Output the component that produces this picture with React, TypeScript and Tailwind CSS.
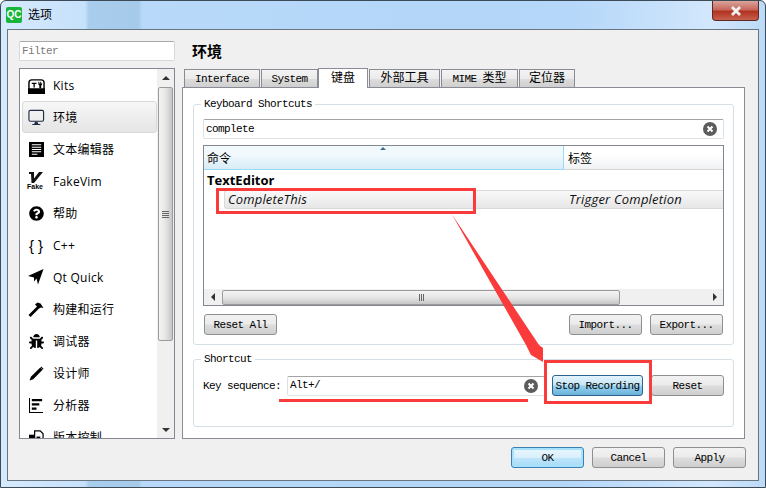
import React from "react";
import { FaBug, FaQuestionCircle } from "react-icons/fa";

const mono = "font-['Liberation_Mono','Noto_Sans_CJK_SC',monospace] text-[11px] tracking-[-0.6px] whitespace-nowrap";
const ui = "font-['Open_Sans','Noto_Sans_CJK_SC',sans-serif]";
const btn =
  "flex items-center justify-center h-[21px] pt-[1px] rounded-[3px] border border-[#8e8f8f] bg-[linear-gradient(#f2f2f2,#ebebeb_48%,#dddddd_52%,#cfcfcf)] text-black";

const Icons: Record<string, React.ReactNode> = {
  kits: (
    <svg viewBox="0 0 18 18" className="w-[17px] h-[17px]">
      <path d="M1 17V6q0-3 3-3h10q3 0 3 3v11z" fill="none" stroke="#000" strokeWidth="1.5" />
      <path d="M0 12h18v6H0z" fill="#000" />
      <path d="M4 6h5v1.5H7.2V11H5.8V7.5H4zM11 5h1v2h1V5h1v2h1V5h0v3l-1 1v3h-2V9l-1-1z" fill="#000" />
    </svg>
  ),
  env: (
    <svg viewBox="0 0 18 18" className="w-[17px] h-[17px]">
      <rect x="1" y="1.5" width="15.5" height="11.5" rx="1.5" fill="none" stroke="#1c2d44" strokeWidth="1.2" />
      <path d="M7.5 13.5h2.5l1 2.5h2v1H4.500v-1h2z" fill="#1c2d44" />
    </svg>
  ),
  text: (
    <svg viewBox="0 0 16 16" className="w-[15px] h-[15px]">
      <path d="M0 0h16v16H0z" fill="#000" />
      <path d="M3 3h10M3 5.500h10M3 8h10M3 10.500h10M3 13h6" stroke="#fff" strokeWidth="1.1" />
    </svg>
  ),
  help: <FaQuestionCircle className="w-[15px] h-[15px] text-black" />,
  bug: <FaBug className="w-[15px] h-[15px] text-black" />,
  plane: (
    <svg viewBox="0 0 16 16" className="w-[16px] h-[16px]">
      <path d="M0 7L15.500 0 10 15.500 8.500 9.500 6 12.500 6 8.500z" fill="#000" />
    </svg>
  ),
  hammer: (
    <svg viewBox="0 0 16 16" className="w-[16px] h-[16px]">
      <path d="M0.500 14L9 5.500 7 3.500 9.500 1.500 12.500 2.500 15.500 7 13 6.500 11 7.500 2.500 16z" fill="#000" />
    </svg>
  ),
  pencil: (
    <svg viewBox="0 0 16 16" className="w-[15px] h-[15px]">
      <path d="M0.500 15.500L2 11.500 12 1.500 14.500 4 4.500 14z" fill="#000" />
      <path d="M13 0.500l2.500 2.500-0.800 0.800-2.500-2.500z" fill="#000" />
    </svg>
  ),
  analyze: (
    <svg viewBox="0 0 16 16" className="w-[15px] h-[15px]">
      <path d="M0.500 0v15.500H15" fill="none" stroke="#000" strokeWidth="1.200" />
      <path d="M3 1h11v2.500H3zM3 5.500h8V8H3zM3 10h5v2.500H3z" fill="#000" />
    </svg>
  ),
  vcs: (
    <svg viewBox="0 0 16 16" className="w-[15px] h-[15px]">
      <path d="M0 5h6V16H0z" fill="#000" />
      <path d="M6 1h6l3 3v11H6z" fill="#fff" stroke="#000" strokeWidth="1.300" />
      <path d="M8 7h4v4H8z" fill="#000" />
    </svg>
  ),
};

const fakeVim = (
  <div className="w-[16px] h-[18px]">
    <svg viewBox="0 0 16 11" className="w-[16px] h-[11px]">
      <path d="M1 0h5v6.500L11 0h4L6 11H3.500L3 2H1z" fill="#111" />
    </svg>
    <span className="block font-['Liberation_Sans',sans-serif] text-[7px] font-bold leading-[7px] -ml-[1px] text-black">Fake</span>
  </div>
);

const curly = <span className="font-['Liberation_Sans',sans-serif] text-[15px] leading-none text-black">{"{ }"}</span>;

const items: { name: string; icon: React.ReactNode; selected?: boolean }[] = [
  { name: "Kits", icon: Icons.kits },
  { name: "环境", icon: Icons.env, selected: true },
  { name: "文本编辑器", icon: Icons.text },
  { name: "FakeVim", icon: fakeVim },
  { name: "帮助", icon: Icons.help },
  { name: "C++", icon: curly },
  { name: "Qt Quick", icon: Icons.plane },
  { name: "构建和运行", icon: Icons.hammer },
  { name: "调试器", icon: Icons.bug },
  { name: "设计师", icon: Icons.pencil },
  { name: "分析器", icon: Icons.analyze },
  { name: "版本控制", icon: Icons.vcs },
];

const cjk = "text-[12px] tracking-normal";

const tabs: { label: React.ReactNode; key: string; w: string; active?: boolean }[] = [
  { key: "interface", label: "Interface", w: "w-[76px]" },
  { key: "system", label: "System", w: "w-[57px]" },
  { key: "keyboard", label: <span className={cjk}>键盘</span>, w: "w-[50px] -ml-[1px]", active: true },
  { key: "tools", label: <span className={cjk}>外部工具</span>, w: "w-[71px]" },
  { key: "mime", label: <span>MIME&nbsp;<span className={cjk}>类型</span></span>, w: "w-[77px]" },
  { key: "locator", label: <span className={cjk}>定位器</span>, w: "w-[56px]" },
];

function ClearIcon() {
  return (
    <svg viewBox="0 0 14 14" className="w-[14px] h-[14px] shrink-0">
      <circle cx="7" cy="7" r="7" fill="#5c5c5c" />
      <path d="M4.500 4.500l5 5M9.500 4.500l-5 5" stroke="#fff" strokeWidth="2" />
    </svg>
  );
}

function GroupTitle({ children }: { children: React.ReactNode }) {
  return (
    <div className={`${mono} -mt-[8px] -ml-[2px] px-[3px] h-[15px] w-fit bg-white leading-[15px] text-black`}>
      {children}
    </div>
  );
}

export default function App() {
  return (
    <div className="relative w-[766px] h-[488px] overflow-hidden rounded-t-[6px] border border-[#3d4a57] bg-[linear-gradient(90deg,#d6eafd_0%,#c6e1fb_11%,#a9cdec_11.5%,#a6cbea_18%,#b8d9f9_18.5%,#b3d6f9_60%,#b5d7f9_75%,#d2e7fc_93%,#bcdaf6_100%)] flex flex-col">
      {/* title bar */}
      <div className="h-[28px] shrink-0 flex items-center pl-[5px]">
        <div className="w-[16px] h-[16px] rounded-[2px] bg-[#17b63b] flex items-center justify-center font-['Liberation_Sans',sans-serif] text-[10px] font-bold text-white leading-none">
          QC
        </div>
        <span className={`${ui} ml-[6px] text-[12px] text-black`}>选项</span>
        <div className="ml-auto -mt-[8px] mr-[6px] w-[47px] h-[20px] rounded-b-[4px] border border-[#5b2a26] border-t-0 bg-[linear-gradient(#d9a49c,#c9685c_45%,#b23320_55%,#c8604f)] flex items-center justify-center">
          <svg viewBox="0 0 12 12" className="w-[12px] h-[12px]">
            <path d="M2 2l8 8M10 2l-8 8" stroke="#f4f4f4" strokeWidth="2.800" />
          </svg>
        </div>
      </div>

      {/* client area */}
      <div className="w-[752px] ml-[6px] h-[452px] shrink-0 border border-[#69767f] bg-[#f0f0f0] flex flex-col">
        <div className="flex h-[409px] shrink-0">
          {/* side list */}
          <div className="w-[174px] shrink-0 pl-[11px] pr-[7px] pt-[11px] flex flex-col">
            <div className={`${mono} h-[20px] rounded-[2px] border border-[#d5d9dd] border-t-[#a9a9a9] bg-white px-[2px] leading-[18px] text-[#7a7a7a]`}>
              Filter
            </div>
            <div className="mt-[7px] h-[371px] border border-[#828790] bg-white flex overflow-hidden">
              <div className="flex-1 pl-[2px] overflow-hidden">
                {items.map((it) => (
                  <div
                    key={it.name}
                    className={`h-[32px] flex items-center rounded-[3px] ${
                      it.selected ? "border border-[#d9d9d9] bg-[linear-gradient(#f7f7f7,#e5e5e5)]" : "border border-transparent"
                    }`}
                  >
                    <div className="w-[20px] ml-[3px] flex justify-center">{it.icon}</div>
                    <span className={`${ui} ml-[7px] pt-[1px] text-[12px] tracking-[0.25px] whitespace-nowrap text-black`}>{it.name}</span>
                  </div>
                ))}
              </div>
              <div className="w-[17px] shrink-0 bg-[#f0f0f0] flex flex-col items-center">
                <div className="h-[18px] shrink-0 flex items-center justify-center">
                  <div className="w-0 h-0 border-x-[4px] border-x-transparent border-b-[4px] border-b-[#333]" />
                </div>
                <div className="w-[15px] h-[254px] shrink-0 rounded-[2px] border border-[#9b9b9b] bg-[linear-gradient(90deg,#f4f4f4,#e6e6e6_50%,#c6c6c6)] flex flex-col items-center justify-center gap-[1px]">
                  <div className="w-[7px] h-[1px] bg-[#666]" />
                  <div className="w-[7px] h-[1px] bg-[#666]" />
                  <div className="w-[7px] h-[1px] bg-[#666]" />
                  <div className="w-[7px] h-[1px] bg-[#666]" />
                </div>
                <div className="flex-1 flex items-end pb-[6px]">
                  <div className="w-0 h-0 border-x-[4px] border-x-transparent border-t-[4px] border-t-[#333]" />
                </div>
              </div>
            </div>
          </div>

          {/* settings page */}
          <div className="w-[563px] shrink-0 pt-[11px] flex flex-col">
            <div className={`${ui} h-[20px] pl-[10px] text-[15px] font-bold leading-[20px] text-black`}>环境</div>
            <div className="mt-[8px] h-[18px] pl-[2px] flex gap-[1px] items-end">
              {tabs.map((t) => (
                <div
                  key={t.key}
                  className={`${t.w} ${mono} flex items-center justify-center pt-[1px] border border-[#898c95] border-b-0 ${
                    t.active ? "h-[20px] bg-white z-10 -mb-[1px]" : "h-[18px] bg-[linear-gradient(#f3f3f3,#ebebeb_50%,#dcdcdc_55%,#cfcfcf)]"
                  } text-black`}
                >
                  {t.label}
                </div>
              ))}
            </div>
            <div className="h-[353px] border border-[#898c95] bg-white px-[10px] pt-[16px] flex flex-col">
              {/* Keyboard Shortcuts */}
              <div className="h-[241px] rounded-[3px] border border-[#d5dfe5] px-[9px] flex flex-col">
                <GroupTitle>Keyboard Shortcuts</GroupTitle>
                <div className="mt-[7px] h-[20px] flex items-center rounded-[2px] border border-[#dde1e5] border-t-[#a4a4a4] pl-[2px] pr-[6px]">
                  <span className={`${mono} text-black`}>complete</span>
                  <div className="ml-auto"><ClearIcon /></div>
                </div>
                <div className="mt-[6px] h-[161px] border border-[#828790] flex flex-col">
                  <div className="h-[24px] shrink-0 flex">
                    <div className="w-[360px] relative flex items-end pl-[3px] pb-[2px] border-b border-r border-[#96d9f9] bg-[linear-gradient(#f2f9fd,#f2f9fd_35%,#d8ecf6)]">
                      <div className="absolute top-[1px] left-[176px] w-0 h-0 border-x-[3px] border-x-transparent border-b-[3px] border-b-[#3b6f93]" />
                      <span className={`${ui} text-[12px] leading-[16px] text-black`}>命令</span>
                    </div>
                    <div className="flex-1 flex items-end pl-[4px] pb-[2px] border-b border-[#d5d5d5] bg-[linear-gradient(#ffffff,#ffffff_35%,#f1f2f4)]">
                      <span className={`${ui} text-[12px] leading-[16px] text-black`}>标签</span>
                    </div>
                  </div>
                  <div className={`${ui} h-[20px] pl-[3px] text-[13px] font-bold leading-[20px] text-black`}>TextEditor</div>
                  <div className="ml-[20px] h-[19px] flex items-center rounded-l-[3px] border-y border-l border-[#d9d9d9] bg-[linear-gradient(#f9f9f9,#e6e6e6)]">
                    <span className={`${ui} w-[341px] pl-[3px] text-[13px] tracking-[0.15px] italic text-[#111]`}>CompleteThis</span>
                    <span className={`${ui} pl-[3px] text-[13px] tracking-[0.2px] italic whitespace-nowrap text-[#111]`}>Trigger Completion</span>
                  </div>
                  <div className="flex-1" />
                  <div className="h-[16px] shrink-0 flex items-center bg-[#f0f0f0]">
                    <div className="w-[18px] shrink-0 flex justify-center">
                      <div className="w-0 h-0 border-y-[4px] border-y-transparent border-r-[4px] border-r-[#333]" />
                    </div>
                    <div className="w-[398px] h-[15px] shrink-0 rounded-[2px] border border-[#9b9b9b] bg-[linear-gradient(#f4f4f4,#e6e6e6_50%,#c6c6c6)] flex items-center justify-center gap-[1px]">
                      <div className="w-[1px] h-[7px] bg-[#666]" />
                      <div className="w-[1px] h-[7px] bg-[#666]" />
                      <div className="w-[1px] h-[7px] bg-[#666]" />
                    </div>
                    <div className="flex-1 flex justify-end pr-[6px]">
                      <div className="w-0 h-0 border-y-[4px] border-y-transparent border-l-[4px] border-l-[#333]" />
                    </div>
                  </div>
                </div>
                <div className="mt-[8px] flex pl-[1px] pr-[1px]">
                  <div className={`${btn} ${mono} w-[73px]`}>Reset All</div>
                  <div className={`${btn} ${mono} w-[73px] ml-auto`}>Import...</div>
                  <div className={`${btn} ${mono} w-[73px] ml-[8px]`}>Export...</div>
                </div>
              </div>

              {/* Shortcut */}
              <div className="mt-[14px] h-[68px] rounded-[3px] border border-[#d5dfe5] px-[9px] flex flex-col">
                <GroupTitle>Shortcut</GroupTitle>
                <div className="mt-[8px] flex items-center h-[21px]">
                  <span className={`${mono} w-[84px] pt-[2px] shrink-0 text-black`}>Key sequence:</span>
                  <div className="w-[258px] h-[20px] flex items-center rounded-[2px] border border-[#dde1e5] border-t-[#a4a4a4] pl-[2px] pr-[6px]">
                    <span className={`${mono} text-black`}>Alt+/</span>
                    <div className="ml-auto"><ClearIcon /></div>
                  </div>
                  <div className={`${mono} ml-[7px] w-[91px] h-[21px] pt-[1px] flex items-center justify-center rounded-[3px] border border-[#2c628b] bg-[linear-gradient(#e5f4fc,#c4e5f6_48%,#98d1ef_52%,#68b3db)] text-black`}>
                    Stop Recording
                  </div>
                  <div className={`${btn} ${mono} w-[73px] ml-[8px]`}>Reset</div>
                </div>
              </div>
            </div>
          </div>
        </div>

        {/* dialog buttons */}
        <div className="flex justify-end gap-[8px] mt-[8px] pr-[12px]">
          <div className={`${mono} w-[73px] h-[21px] pt-[1px] flex items-center justify-center rounded-[3px] border border-[#3c7fb1] shadow-[inset_0_0_0_2px_#a6e2fb] bg-[linear-gradient(#eaf6fd,#d9f0fc_50%,#bee6fd_52%,#a7d9f5)] text-black`}>
            OK
          </div>
          <div className={`${btn} ${mono} w-[73px]`}>Cancel</div>
          <div className={`${btn} ${mono} w-[73px]`}>Apply</div>
        </div>
      </div>

      {/* red annotations drawn over the dialog */}
      <div className="absolute left-[215px] top-[187px] w-[260px] h-[26px] border-[3px] border-[#f93b3b]" />
      <div className="absolute left-[543px] top-[359px] w-[108px] h-[44px] border-[3px] border-[#f93b3b]" />
      <div className="absolute left-[278px] top-[398px] w-[249px] h-[3px] bg-[#f93b3b]" />
      <svg className="absolute left-[439px] top-[204px] w-[120px] h-[170px]" viewBox="0 0 120 170">
        <path d="M11.700 9L99 140 103 143 103 157 91 150 86 140z" fill="#f93b3b" />
      </svg>
    </div>
  );
}
